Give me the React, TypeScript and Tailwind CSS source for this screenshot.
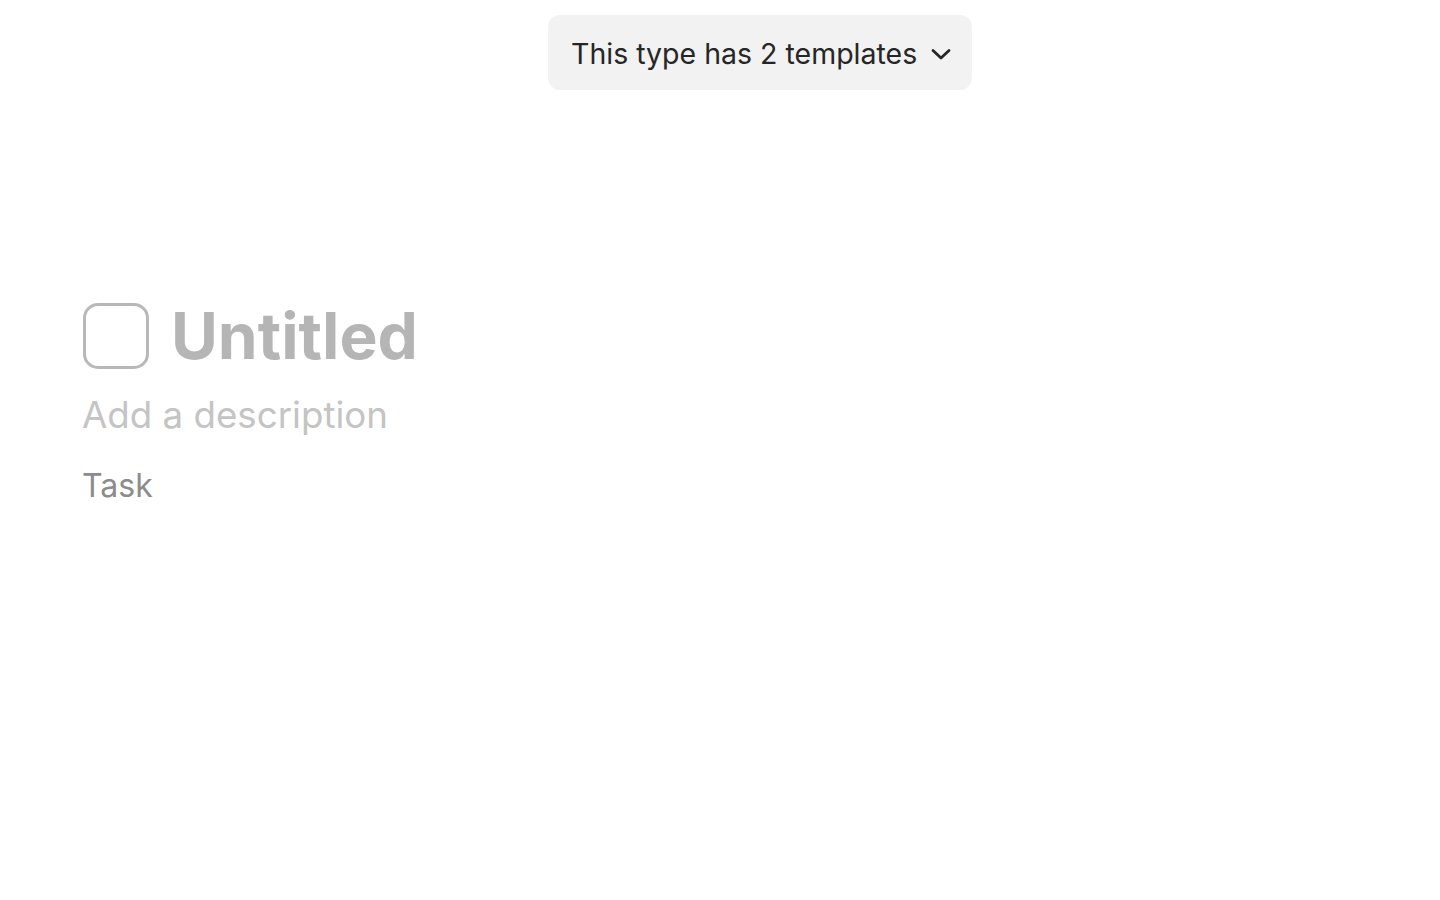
export default function App() {
  return (
    <div
      className="min-h-screen w-full bg-white"
      style={{ fontFamily: "Inter, 'Noto Sans', sans-serif" }}
    >
      <div className="pl-[548px] pt-[15px]">
        <button className="flex h-[75px] w-[424px] items-center rounded-xl bg-[#f2f2f2] pl-[23px] pt-[3px] text-[28.5px] text-[#262626]">
          <span>This type has 2 templates</span>
          <svg
            className="ml-[14px]"
            width="20"
            height="14"
            viewBox="0 0 20 14"
            fill="none"
            stroke="#262626"
            strokeWidth="2.8"
            strokeLinecap="round"
            strokeLinejoin="round"
          >
            <path d="M2 3.5l8 7.5 8-7.5" />
          </svg>
        </button>
      </div>

      <div className="px-[82px] pt-[213px]">
        <div className="flex items-center gap-[22px]">
          <div className="ml-[1px] h-[66px] w-[66px] rounded-[15px] border-[3px] border-[#b8b8b8]" />
          <h1 className="text-[64px] font-bold leading-none text-[#b5b5b5]">Untitled</h1>
        </div>
        <p className="mt-[28px] text-[36.7px] leading-none text-[#c4c4c4]">Add a description</p>
        <p className="mt-[36px] text-[32px] leading-none text-[#8c8c8c]">Task</p>
      </div>
    </div>
  );
}
